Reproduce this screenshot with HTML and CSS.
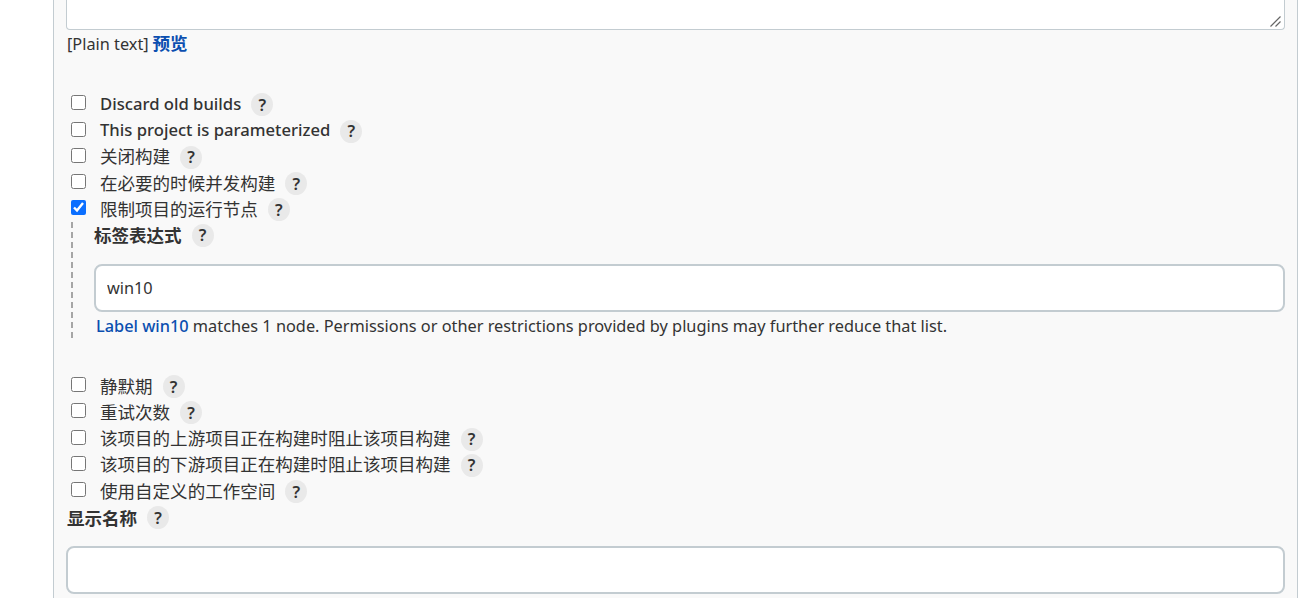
FILE: index.html
```html
<!DOCTYPE html>
<html lang="zh">
<head>
<meta charset="utf-8">
<title>Jenkins</title>
<link rel="stylesheet" href="styles.css">
</head>
<body>
<main class="panel">
  <div class="desc-box">
    <textarea class="desc-area" aria-label="描述"></textarea>
    <svg class="grip" width="12" height="12" viewBox="0 0 12 12" aria-hidden="true"><path d="M0.5 10.5 L10.5 0.5 M5.5 10.5 L10.5 5.5"/></svg>
  </div>
  <div class="format"><span class="latin">[Plain text]</span> <a class="link strong" href="#">预览</a></div>
  <div class="options first">
    <div class="opt"><input type="checkbox"><label class="latin head">Discard old builds</label><span class="help">?</span></div>
    <div class="opt"><input type="checkbox"><label class="latin head">This project is parameterized</label><span class="help">?</span></div>
    <div class="opt"><input type="checkbox"><label>关闭构建</label><span class="help">?</span></div>
    <div class="opt"><input type="checkbox"><label>在必要的时候并发构建</label><span class="help">?</span></div>
    <div class="opt"><input type="checkbox" checked><label>限制项目的运行节点</label><span class="help">?</span></div>
  </div>
  <section class="nested">
    <div class="field-label"><span class="strong">标签表达式</span><span class="help">?</span></div>
    <input class="text-input latin" type="text" value="win10" aria-label="标签表达式">
    <div class="note latin"><a class="link medium" href="#">Label win10</a> matches 1 node. Permissions or other restrictions provided by plugins may further reduce that list.</div>
  </section>
  <div class="options second">
    <div class="opt"><input type="checkbox"><label>静默期</label><span class="help">?</span></div>
    <div class="opt"><input type="checkbox"><label>重试次数</label><span class="help">?</span></div>
    <div class="opt"><input type="checkbox"><label>该项目的上游项目正在构建时阻止该项目构建</label><span class="help">?</span></div>
    <div class="opt"><input type="checkbox"><label>该项目的下游项目正在构建时阻止该项目构建</label><span class="help">?</span></div>
    <div class="opt"><input type="checkbox"><label>使用自定义的工作空间</label><span class="help">?</span></div>
  </div>
  <div class="field-label outer"><span class="strong">显示名称</span><span class="help">?</span></div>
  <input class="text-input" type="text" aria-label="显示名称">
</main>
</body>
</html>
```
FILE: styles.css
```css
* { box-sizing: border-box; }
html, body { height: 100%; overflow: hidden; }
body {
  margin: 0;
  background: #fff;
  color: #333;
  font: 17.55px/24px "Noto Sans CJK SC", "Noto Sans", sans-serif;
}
.latin { font-family: "Noto Sans", sans-serif; font-size: 16.3px; }
.panel {
  width: 1245px;
  height: 598px;
  margin-left: 53px;
  padding: 0 12px;
  background: #f9f9f9;
  border-left: 1px solid #c3ccd1;
  border-right: 1px solid #c3ccd1;
}
.desc-box { position: relative; height: 30px; }
.desc-area {
  display: block;
  width: 100%;
  height: 30px;
  background: #fff;
  border: 1px solid #c3ccd1;
  border-top: 0;
  border-radius: 0 0 4px 4px;
  outline: 0;
  padding: 0;
  resize: none;
}
.grip { position: absolute; right: 3px; bottom: 2px; }
.grip path { fill: none; stroke: #666; stroke-width: 1.2; }
.format { height: 26px; margin-top: 1px; padding-left: 1px; }
.link { color: #0b4fb0; text-decoration: none; }
.strong { font-weight: 700; }
.medium { font-weight: 500; }
.head { font-weight: 500; font-size: 16.65px; }
.options { display: flex; flex-direction: column; padding-left: 4px; }
.options.first { margin: 34.65px 0 -0.65px; }
.options.second { margin: 35.3px 0 -0.3px; }
.opt { display: flex; align-items: center; height: 26.25px; }
.opt input { width: 15px; height: 15px; margin: 0 14px 4px 1px; flex: none; accent-color: #0b6fff; }
.opt label { margin-bottom: 2px; }
.help {
  display: inline-flex;
  align-items: center;
  justify-content: center;
  width: 22px;
  height: 23px;
  margin-left: 10px;
  border-radius: 50%;
  background: #e9e9e9;
  font: 600 16.5px/22px "Noto Sans", sans-serif;
  flex: none;
}
.nested {
  margin-left: 5px;
  padding-left: 21px;
  height: 116px;
  border-left: 2px dashed #a6a6a6;
}
.nested .text-input { margin-top: 16px; }
.field-label { display: flex; align-items: center; height: 26px; }
.field-label.outer { padding-left: 1px; }
.text-input {
  display: block;
  width: 100%;
  height: 48px;
  margin-top: 15px;
  background: #fff;
  border: 2px solid #c3ccd1;
  border-radius: 8px;
  padding: 0 11px;
  color: #333;
  outline: 0;
}
.note { margin: 2px 0 0 2px; font-size: 16.32px; }
```
